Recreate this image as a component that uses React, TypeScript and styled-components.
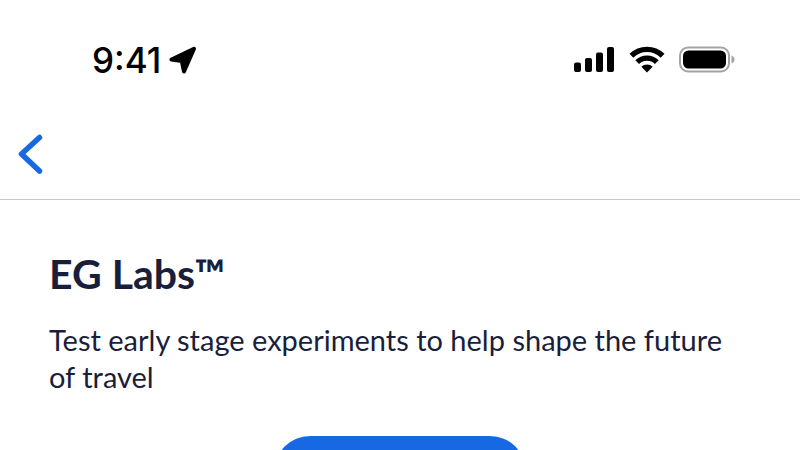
import React from "react";
import styled, { createGlobalStyle } from "styled-components";

const GlobalStyle = createGlobalStyle`
  *, *::before, *::after { box-sizing: border-box; }
  body { margin: 0; background: #fff; }
`;

const Screen = styled.div`
  height: 100vh;
  overflow-y: auto;
  scrollbar-width: none;
  background: #fff;
  color: #191e3b;
  font-family: Lato, "Open Sans", sans-serif;
`;

const StatusBar = styled.header`
  display: flex;
  align-items: center;
  justify-content: space-between;
  height: 120px;
  padding: 0 65px 0 92px;
  color: #000;
`;

const StatusGroup = styled.div<{ $gap: number }>`
  display: flex;
  align-items: center;
  gap: ${({ $gap }) => $gap}px;
`;

const Time = styled.time`
  font: 500 35px/40px Inter, sans-serif;
`;

const Glyph = styled.svg`
  display: block;
  flex: none;
`;

const NavBar = styled.nav`
  display: flex;
  align-items: center;
  height: 80px;
  padding: 0 16px 12px;
  border-bottom: 1px solid #c8c9cc;
`;

const BackButton = styled.button`
  display: flex;
  padding: 0;
  border: 0;
  background: none;
  color: #1668e3;
  cursor: pointer;
`;

const Content = styled.main`
  display: flex;
  flex-direction: column;
  padding: 49px 49px 40px;
`;

const Title = styled.h1`
  margin: 0;
  font-size: 41px;
  line-height: 50px;
  font-weight: 700;
`;

const Description = styled.p`
  margin: 22px 0 0;
  font-size: 29px;
  line-height: 37px;
`;

const PrimaryButton = styled.button`
  align-self: center;
  width: 252px;
  height: 72px;
  margin-top: 41px;
  border: 0;
  border-radius: 36px;
  background: #1668e3;
  cursor: pointer;
`;

export default function App() {
  return (
    <Screen>
      <GlobalStyle />
      <StatusBar>
        <StatusGroup $gap={8}>
          <Time>9:41</Time>
          <Glyph width="28" height="28" viewBox="0 0 28 28" aria-hidden="true">
            <path
              d="M2.500 13.500 25 2.800 15 25.500 12.800 15Z"
              fill="currentColor"
              stroke="currentColor"
              strokeWidth="4"
              strokeLinejoin="round"
            />
          </Glyph>
        </StatusGroup>
        <StatusGroup $gap={14}>
          <Glyph width="41" height="28" viewBox="0 0 41 28" fill="currentColor" aria-label="Signal">
            <rect x="0" y="16.500" width="7" height="9.500" rx="2" />
            <rect x="11" y="12" width="7" height="14" rx="2" />
            <rect x="22" y="6.500" width="7" height="19.500" rx="2" />
            <rect x="33" y="1" width="7" height="25" rx="2" />
          </Glyph>
          <Glyph width="36" height="28" viewBox="0 0 36 28" aria-label="Wi-Fi">
            <g fill="none" stroke="currentColor" strokeWidth="5.4">
              <path d="M2.400 9.700a22.400 22.400 0 0 1 31.200 0" />
              <path d="M8.200 16.100a14 14 0 0 1 19.600 0" />
            </g>
            <path d="M12.300 20.800a8 8 0 0 1 11.400 0L18 26.500Z" fill="currentColor" />
          </Glyph>
          <Glyph width="56" height="28" viewBox="0 0 56 28" aria-label="Battery">
            <rect x="1" y="1.5" width="49" height="24" rx="8" fill="none" stroke="#a3a3a3" strokeWidth="2" />
            <rect x="4" y="4.5" width="43" height="18" rx="5.5" fill="currentColor" />
            <path d="M52.500 9.500c4 1.400 4 6.600 0 8Z" fill="#a3a3a3" />
          </Glyph>
        </StatusGroup>
      </StatusBar>
      <NavBar>
        <BackButton aria-label="Back">
          <Glyph width="28" height="40" viewBox="0 0 28 40" aria-hidden="true">
            <path
              d="M23.500 3.500 5.500 20l18 17"
              fill="none"
              stroke="currentColor"
              strokeWidth="5.500"
              strokeLinecap="round"
              strokeLinejoin="round"
            />
          </Glyph>
        </BackButton>
      </NavBar>
      <Content>
        <Title>EG Labs™</Title>
        <Description>
          Test early stage experiments to help shape the future of travel
        </Description>
        <PrimaryButton aria-label="Get started" />
      </Content>
    </Screen>
  );
}
